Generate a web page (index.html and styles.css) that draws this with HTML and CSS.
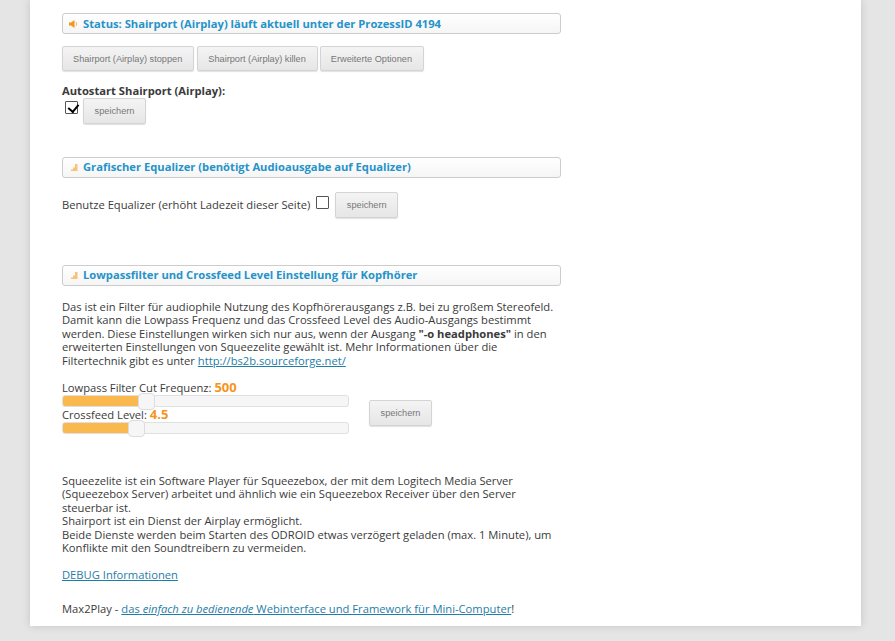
FILE: index.html
```html
<!DOCTYPE html>
<html lang="de">
  <head>
    <meta charset="UTF-8" />
    <title>Max2Play</title>
    <link rel="stylesheet" href="styles.css">
  </head>
  <body>
    <div class="page">
      <div class="content">
        <h3 class="section-title">
          <svg class="title-icon" width="10" height="10" viewBox="0 0 10 10"><path d="M0 3.500h2L5.500 1v8L2 6.500H0z" fill="#f7941d"/><path d="M7 3q1.200 2 0 4" stroke="#f9b860" fill="none"/></svg>
          Status: Shairport (Airplay) läuft aktuell unter der ProzessID 4194
        </h3>
        <div class="button-row">
          <button class="first-button">Shairport (Airplay) stoppen</button>
          <button>Shairport (Airplay) killen</button>
          <button>Erweiterte Optionen</button>
        </div>
        <p class="autostart-label">Autostart Shairport (Airplay):</p>
        <div class="autostart-row">
          <input type="checkbox" checked />
          <button class="save-button">speichern</button>
        </div>

        <h3 class="section-title eq-title">
          <svg class="title-icon" width="10" height="10" viewBox="0 0 10 10"><path d="M2 7.500h2V9H2zM4 5.500h2V9H4zM6 2h2.500v7H6z" fill="#f9c27a"/></svg>
          Grafischer Equalizer (benötigt Audioausgabe auf Equalizer)
        </h3>
        <div class="eq-row">
          <span>Benutze Equalizer (erhöht Ladezeit dieser Seite)</span>
          <input type="checkbox" />
          <button class="save-button">speichern</button>
        </div>

        <h3 class="section-title low-title">
          <svg class="title-icon" width="10" height="10" viewBox="0 0 10 10"><path d="M2 7.500h2V9H2zM4 5.500h2V9H4zM6 2h2.500v7H6z" fill="#f9c27a"/></svg>
          Lowpassfilter und Crossfeed Level Einstellung für Kopfhörer
        </h3>
        <p class="intro">
          Das ist ein Filter für audiophile Nutzung des Kopfhörerausgangs z.B. bei zu großem Stereofeld.<br>
          Damit kann die Lowpass Frequenz und das Crossfeed Level des Audio-Ausgangs bestimmt<br>
          werden. Diese Einstellungen wirken sich nur aus, wenn der Ausgang <b>"-o headphones"</b> in den<br>
          erweiterten Einstellungen von Squeezelite gewählt ist. Mehr Informationen über die<br>
          Filtertechnik gibt es unter <a href="#">http://bs2b.sourceforge.net/</a>
        </p>
        <div class="filter-row">
          <div class="sliders">
            <div class="slider-label">Lowpass Filter Cut Frequenz: <span class="value">500</span></div>
            <div class="slider"><div class="slider-fill" style="width: 29.3%"></div><div class="slider-handle" style="left: 29.3%"></div></div>
            <div class="slider-label">Crossfeed Level: <span class="value">4.5</span></div>
            <div class="slider"><div class="slider-fill" style="width: 25.8%"></div><div class="slider-handle" style="left: 25.8%"></div></div>
          </div>
          <button class="save-button">speichern</button>
        </div>
        <p class="info">
          Squeezelite ist ein Software Player für Squeezebox, der mit dem Logitech Media Server<br>
          (Squeezebox Server) arbeitet und ähnlich wie ein Squeezebox Receiver über den Server<br>
          steuerbar ist.<br>
          Shairport ist ein Dienst der Airplay ermöglicht.<br>
          Beide Dienste werden beim Starten des ODROID etwas verzögert geladen (max. 1 Minute), um<br>
          Konflikte mit den Soundtreibern zu vermeiden.
        </p>
        <p class="debug"><a href="#">DEBUG Informationen</a></p>
        <p class="footer-line">Max2Play - <a href="#">das <i>einfach zu bedienende</i> Webinterface und Framework für Mini-Computer</a>!</p>
      </div>
    </div>
  </body>
</html>
```

FILE: styles.css
```css
/* Reset */
* {
  margin: 0;
  padding: 0;
  box-sizing: border-box;
}

html,
body {
  height: 641px;
  overflow: hidden;
}

body {
  background-color: #e5e5e5;
  color: #3a3a3a;
  font-family: "Open Sans", sans-serif;
  font-size: 11.2px;
  line-height: 13.5px;
}

.page {
  width: 831px;
  height: 626px;
  margin-left: 30px;
  background-color: #fff;
  box-shadow: 0 0 8px rgba(0, 0, 0, 0.15);
  overflow: hidden;
}

.content {
  width: 499px;
  margin-left: 32px;
  padding-top: 13px;
}

.section-title {
  display: flex;
  align-items: center;
  height: 21px;
  padding-left: 6px;
  border: 1px solid #ccc;
  border-radius: 3px;
  background: linear-gradient(#fff, #f5f5f5);
  color: #2693c9;
  font-size: 11.2px;
  font-weight: 700;
}

.title-icon {
  margin-right: 4px;
  flex: none;
}

button {
  height: 25px;
  padding: 0 11px 0 10px;
  border: 1px solid #d4d4d4;
  border-radius: 2px;
  background: linear-gradient(#f4f4f4, #e6e6e6);
  box-shadow: 0 1px 1px rgba(0, 0, 0, 0.12);
  color: #777;
  font-family: "Liberation Sans", Arial, sans-serif;
  font-size: 9.2px;
}

.first-button {
  margin-right: 1px;
}

.save-button {
  width: 63px;
  height: 26px;
  padding: 0;
}

input[type="checkbox"] {
  appearance: none;
  position: relative;
  width: 13px;
  height: 13px;
  border: 1px solid #555;
  border-radius: 1px;
  background-color: #fff;
}

input[type="checkbox"]:checked::after {
  content: "";
  position: absolute;
  left: 3.5px;
  top: 0.5px;
  width: 4.5px;
  height: 8px;
  border-right: 2.2px solid #000;
  border-bottom: 2.2px solid #000;
  transform: rotate(40deg);
}

.button-row {
  display: flex;
  gap: 2px;
  margin-top: 12px;
}

.autostart-label {
  margin-top: 13px;
  font-weight: 700;
}

.autostart-row {
  display: flex;
  align-items: flex-start;
  gap: 5px;
  padding-left: 3px;
}

.autostart-row input {
  margin-top: 3px;
}

.eq-title {
  margin-top: 33px;
}

.eq-row {
  display: flex;
  align-items: center;
  margin-top: 14px;
}

.eq-row input {
  margin: 0 6px 0 6px;
  position: relative;
  top: -2px;
}

.low-title {
  margin-top: 47px;
}

.intro {
  margin-top: 14px;
}

a {
  color: #1f7da8;
}

.filter-row {
  display: flex;
  align-items: flex-end;
  gap: 20px;
  margin-top: 13px;
}

.filter-row .save-button {
  margin-bottom: 8px;
}

.sliders {
  width: 287px;
}

.slider-label {
  line-height: 14px;
}

.value {
  color: #f7941d;
  font-size: 13px;
  font-weight: 700;
}

.slider {
  position: relative;
  height: 12px;
  border: 1px solid #e0e0e0;
  border-radius: 3px;
  background-color: #f6f6f6;
}

.slider-fill {
  height: 100%;
  background-color: #f9b94f;
  border-radius: 2px 0 0 2px;
}

.slider-handle {
  position: absolute;
  top: -3px;
  width: 17px;
  height: 17px;
  margin-left: -8.5px;
  border: 1px solid #ddd;
  border-radius: 4px;
  background-color: #f6f6f6;
}

.info {
  margin-top: 39.5px;
}

.debug {
  margin-top: 13px;
}

.footer-line {
  margin-top: 21px;
}
```
